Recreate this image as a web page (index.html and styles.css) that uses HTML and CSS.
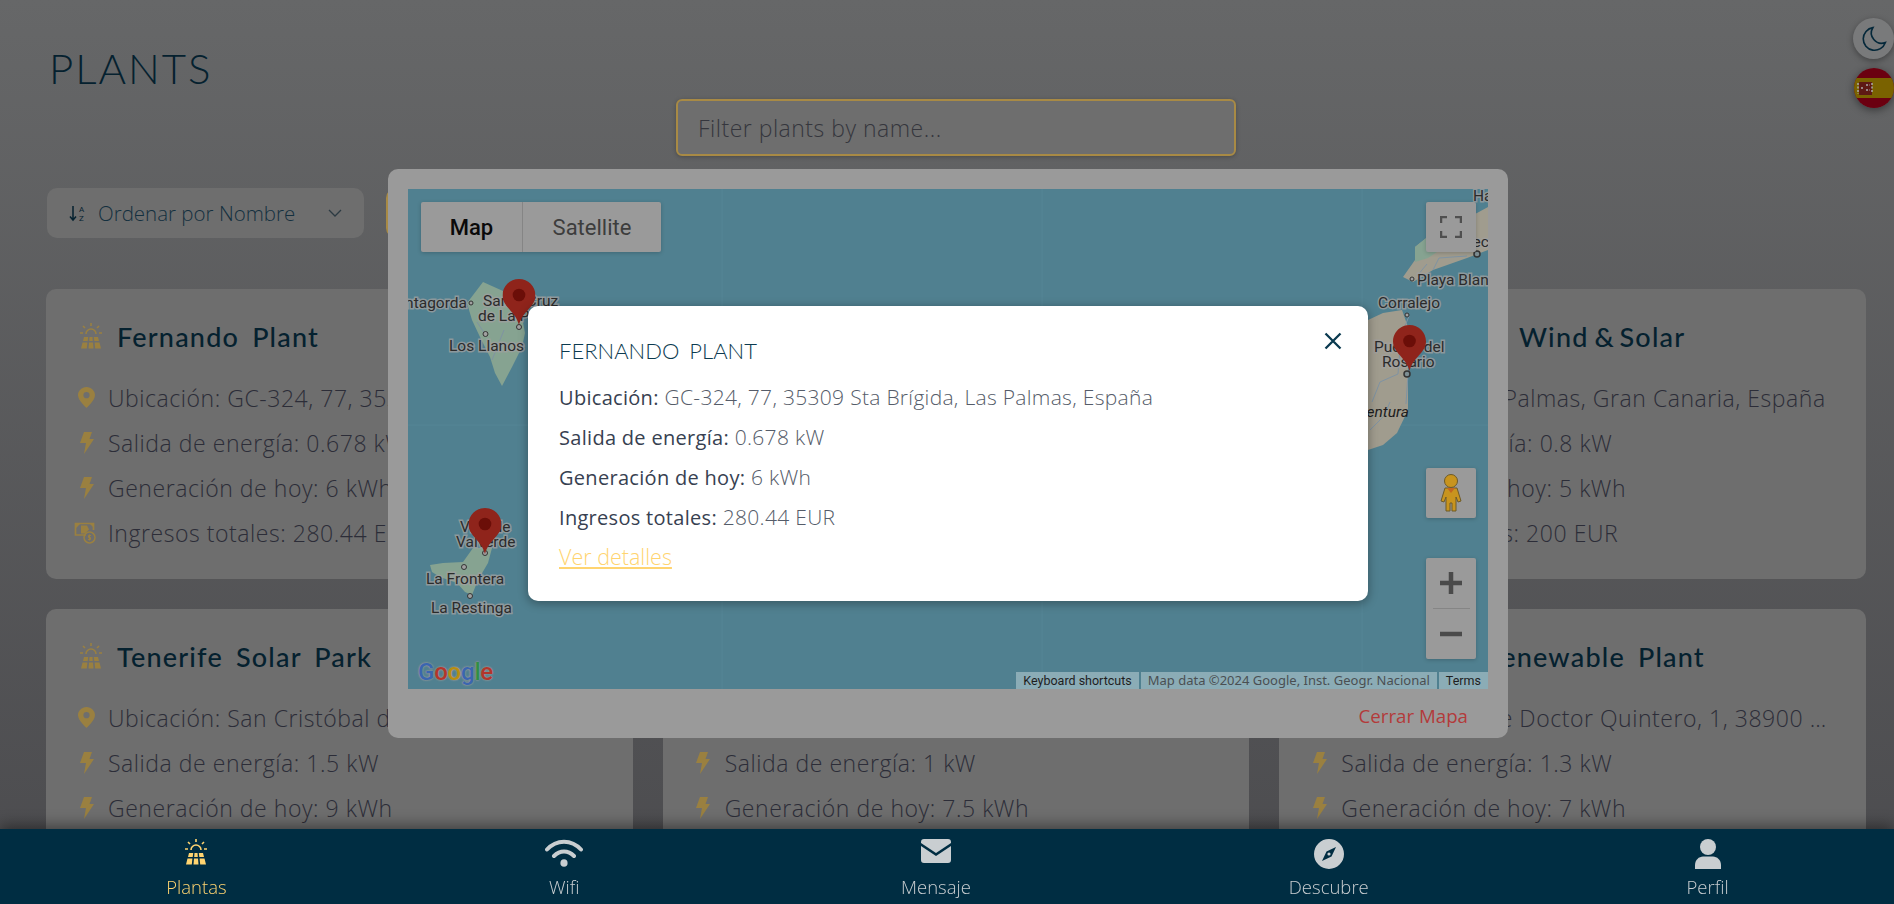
FILE: index.html
```html
<!DOCTYPE html>
<html lang="en">
<head>
  <meta charset="UTF-8" />
  <title>Plants</title>
  <link rel="stylesheet" href="styles.css">
</head>
<body>
  <svg class="sprites" width="0" height="0">
    <symbol id="i-panel" viewBox="0 0 26 26">
      <path d="M13 0v3M5 3l2 2M21 3l-2 2M2 10h3M21 10h3M8 11a5 5 0 0 1 10 0" fill="none" stroke="currentColor" stroke-width="1.6"/>
      <path d="M6 14h4.200l-.5 4H5zM11.500 14h3l.3 4h-3.600zM15.800 14H20l1 4h-4.700zM4.500 19.500h4.900L8.800 25.500H3zM11 19.500h4l.5 6h-5zM16.600 19.500h4.900L23 25.500h-5.800z" fill="currentColor"/>
    </symbol>
    <symbol id="i-pin" viewBox="0 0 17 21">
      <path fill-rule="evenodd" fill="currentColor" d="M8.500 0C3.800 0 0 3.700 0 8.300 0 13.500 8.500 21 8.500 21S17 13.500 17 8.300C17 3.700 13.200 0 8.500 0zm0 11.300a3.100 3.100 0 1 1 0-6.200 3.100 3.100 0 0 1 0 6.200z"/>
    </symbol>
    <symbol id="i-bolt" viewBox="0 0 14 22">
      <path fill="currentColor" d="M4 0h8L9.500 7H14L4 22l2-11H0z"/>
    </symbol>
    <symbol id="i-money" viewBox="0 0 22 22">
      <path d="M12 13H1.500V1.500h18V8" fill="none" stroke="currentColor" stroke-width="1.700"/>
      <path d="M1.500 1.500h5l-5 5zM19.500 1.500v4l-4-4zM7 3.500h6l2 4-4 4H7z" fill="currentColor"/>
      <circle cx="15.500" cy="15.500" r="5.500" fill="none" stroke="currentColor" stroke-width="1.500"/>
      <path d="M17 13.500h-2.500v2h2v2H14M15.500 12.500v6" fill="none" stroke="currentColor"/>
    </symbol>
  </svg>

  <main class="page">
    <h1 class="page-title">PLANTS</h1>
    <div class="filter-row">
      <input class="filter-input" type="text" placeholder="Filter plants by name..." />
    </div>
    <div class="toolbar">
      <div class="sort-select">
        <svg class="sort-icon" viewBox="0 0 17 17">
          <path d="M4 1v14M1 11.500 4 15l3-3.500" fill="none" stroke="currentColor" stroke-width="1.500"/>
          <text x="10" y="7" class="sort-letter">A</text>
          <text x="10" y="16" class="sort-letter">Z</text>
        </svg>
        <span class="sort-label">Ordenar por Nombre</span>
        <svg class="sort-chevron" viewBox="0 0 14 8"><path d="M1 1l6 6 6-6" fill="none" stroke="currentColor" stroke-width="1.300"/></svg>
      </div>
      <button class="map-btn" aria-label="Map"></button>
    </div>

    <div class="plant-grid">
      <article class="card">
        <h2 class="card-title"><svg class="title-icon"><use href="#i-panel"/></svg>Fernando Plant</h2>
        <p class="row"><span class="row-icon"><svg class="ic-pin"><use href="#i-pin"/></svg></span><span class="row-text">Ubicación: GC-324, 77, 35309 Sta Brígida, Las Palmas, España</span></p>
        <p class="row"><span class="row-icon"><svg class="ic-bolt"><use href="#i-bolt"/></svg></span><span class="row-text">Salida de energía: 0.678 kW</span></p>
        <p class="row"><span class="row-icon"><svg class="ic-bolt"><use href="#i-bolt"/></svg></span><span class="row-text">Generación de hoy: 6 kWh</span></p>
        <p class="row"><span class="row-icon"><svg class="ic-money"><use href="#i-money"/></svg></span><span class="row-text">Ingresos totales: 280.44 EUR</span></p>
      </article>
      <article class="card"></article>
      <article class="card">
        <h2 class="card-title"><svg class="title-icon"><use href="#i-panel"/></svg><span>Grancanaria Wind<span class="title-amp"> &amp; </span>Solar</span></h2>
        <p class="row"><span class="row-icon"><svg class="ic-pin"><use href="#i-pin"/></svg></span><span class="row-text">Ubicación: Las Palmas, Gran Canaria, España</span></p>
        <p class="row"><span class="row-icon"><svg class="ic-bolt"><use href="#i-bolt"/></svg></span><span class="row-text">Salida de energía: 0.8 kW</span></p>
        <p class="row"><span class="row-icon"><svg class="ic-bolt"><use href="#i-bolt"/></svg></span><span class="row-text">Generación de hoy: 5 kWh</span></p>
        <p class="row"><span class="row-icon"><svg class="ic-money"><use href="#i-money"/></svg></span><span class="row-text">Ingresos totales: 200 EUR</span></p>
      </article>
      <article class="card">
        <h2 class="card-title"><svg class="title-icon"><use href="#i-panel"/></svg>Tenerife Solar Park</h2>
        <p class="row"><span class="row-icon"><svg class="ic-pin"><use href="#i-pin"/></svg></span><span class="row-text">Ubicación: San Cristóbal de La Laguna, Santa Cruz de Tenerife</span></p>
        <p class="row"><span class="row-icon"><svg class="ic-bolt"><use href="#i-bolt"/></svg></span><span class="row-text">Salida de energía: 1.5 kW</span></p>
        <p class="row"><span class="row-icon"><svg class="ic-bolt"><use href="#i-bolt"/></svg></span><span class="row-text">Generación de hoy: 9 kWh</span></p>
      </article>
      <article class="card">
        <h2 class="card-title"></h2>
        <p class="row"></p>
        <p class="row"><span class="row-icon"><svg class="ic-bolt"><use href="#i-bolt"/></svg></span><span class="row-text">Salida de energía: 1 kW</span></p>
        <p class="row"><span class="row-icon"><svg class="ic-bolt"><use href="#i-bolt"/></svg></span><span class="row-text">Generación de hoy: 7.5 kWh</span></p>
      </article>
      <article class="card">
        <h2 class="card-title"><svg class="title-icon"><use href="#i-panel"/></svg>El Hierro Renewable Plant</h2>
        <p class="row"><span class="row-icon"><svg class="ic-pin"><use href="#i-pin"/></svg></span><span class="row-text">Ubicación: Calle Doctor Quintero, 1, 38900 Valverde, El Hierro, España</span></p>
        <p class="row"><span class="row-icon"><svg class="ic-bolt"><use href="#i-bolt"/></svg></span><span class="row-text">Salida de energía: 1.3 kW</span></p>
        <p class="row"><span class="row-icon"><svg class="ic-bolt"><use href="#i-bolt"/></svg></span><span class="row-text">Generación de hoy: 7 kWh</span></p>
      </article>
    </div>
  </main>

  <div class="side-btns">
    <button class="moon-btn" aria-label="Dark mode">
      <svg viewBox="0 0 24 24" width="26" height="26"><path d="M11 1.500a10.500 10.500 0 1 0 11.500 13.800A9.500 9.500 0 0 1 11 1.500z" fill="none" stroke="currentColor" stroke-width="1.500"/></svg>
    </button>
    <div class="flag">
      <svg viewBox="0 0 40 40" width="40" height="40">
        <rect width="40" height="40" fill="#6b0010"/>
        <rect y="10" width="40" height="20" fill="#7a6200"/>
        <rect x="5" y="14" width="13" height="13" fill="#5e1a14"/>
        <path d="M4 15v11M18 15v10M7 20h3M12 17h4M12 22h4" stroke="#a9a9a9" stroke-width="1.500" stroke-dasharray="2 1.500"/>
      </svg>
    </div>
  </div>

  <div class="overlay">
    <section class="map-modal">
      <div class="map">
        <svg class="map-canvas" viewBox="408 189 1080 500" width="1080" height="500">
          <defs>
            <symbol id="marker" viewBox="0 0 33 46">
              <path fill="#8f241b" d="M16.500 0C7.400 0 0 7.400 0 16.500 0 28 13 32 16.500 46 20 32 33 28 33 16.500 33 7.400 25.600 0 16.500 0z"/>
              <circle cx="16.500" cy="16" r="6.300" fill="#6b0e08"/>
            </symbol>
          </defs>
          <g class="seams">
            <path d="M722 189v500M1042 189v500M1362 189v500M408 425h1080"/>
          </g>
          <polygon class="land-green" points="467,303 483,282 503,291 522,317 525,333 522,347 512,367 502,386 495,373 490,357 480,337 472,320"/>
          <polygon class="land-green" points="430,565 443,563 463,562 473,548 492,548 488,563 478,580 472,595 465,592 457,583 440,577 432,572"/>
          <polygon class="land-sand" points="1415,247 1430,235 1477,213 1488,207 1488,250 1467,258 1433,270 1413,282 1403,277 1415,260"/>
          <polygon class="land-green" points="1415,247 1430,235 1445,232 1440,250 1428,258 1415,262"/>
          <polygon class="land-sand" points="1368,320 1383,313 1402,310 1408,327 1408,377 1408,410 1397,433 1383,445 1368,450"/>
          <path class="road" d="M1409 316l-8 20-3 38-18 8-8 20M1408 374l-2 30M1370 430l14-14 6-14M1433 270l6-12 28-2M1417 276l10-12"/>
          <path class="road" d="M485 334l-8 -12M492 360l12 -30"/>

          <g class="towns">
            <circle cx="471" cy="303" r="2"/><circle cx="519" cy="327" r="2.500"/><circle cx="485.500" cy="334" r="2.500"/>
            <circle cx="485" cy="553" r="2.500"/><circle cx="464" cy="567" r="2.500"/><circle cx="470" cy="596" r="2.500"/>
            <circle cx="1412" cy="279" r="2"/><circle cx="1407" cy="315" r="2"/>
            <circle class="town-big" cx="1477" cy="254" r="3"/><circle class="town-big" cx="1407" cy="374" r="3"/>
          </g>
          <g class="labels">
            <text x="467" y="308" text-anchor="end">Puntagorda</text>
            <text x="483" y="306">Santa Cruz</text>
            <text x="478" y="321">de La Palma</text>
            <text x="449" y="351">Los Llanos</text>
            <text x="460" y="532">Villa de</text>
            <text x="456" y="547">Valverde</text>
            <text x="426" y="584">La Frontera</text>
            <text x="431" y="613">La Restinga</text>
            <text x="1473" y="201">Haría</text>
            <text x="1452" y="247">Arrecife</text>
            <text x="1417" y="285">Playa Blanca</text>
            <text x="1378" y="308">Corralejo</text>
            <text x="1374" y="352">Puerto del</text>
            <text x="1382" y="367">Rosario</text>
            <text x="1409" y="417" text-anchor="end" class="label-island">Fuerteventura</text>
          </g>
          <use href="#marker" x="502.500" y="279" width="33" height="46"/>
          <use href="#marker" x="468.500" y="508" width="33" height="46"/>
          <use href="#marker" x="1393" y="325" width="33" height="46"/>
        </svg>

        <div class="map-types">
          <span class="map-type map-type-on">Map</span>
          <span class="map-type">Satellite</span>
        </div>
        <div class="map-ctl map-full">
          <svg viewBox="0 0 22 22" width="22" height="22"><path d="M1 7V1h6M15 1h6v6M21 15v6h-6M7 21H1v-6" fill="none" stroke="#4f4f4f" stroke-width="2.500"/></svg>
        </div>
        <div class="map-ctl map-peg">
          <svg viewBox="0 0 22 38" width="22" height="38">
            <circle cx="11" cy="7" r="6.500" fill="#c8941e" stroke="#6d5a28"/>
            <path d="M5 14h12l4 13-3 1-2-5v14h-4v-8h-2v8H6V23l-2 5-3-1z" fill="#c8941e" stroke="#6d5a28"/>
            <path d="M7 14h8l-4 5z" fill="#c2651f"/>
          </svg>
        </div>
        <div class="map-ctl map-zoom">
          <span class="zoom-part"><svg viewBox="0 0 22 22" width="22" height="22"><path d="M0 11h22M11 0v22" stroke="#4a4a4a" stroke-width="4.500"/></svg></span>
          <span class="zoom-line"></span>
          <span class="zoom-part"><svg viewBox="0 0 22 22" width="22" height="22"><path d="M0 11h22" stroke="#4a4a4a" stroke-width="4.500"/></svg></span>
        </div>
        <div class="google-logo"><span class="g-blue">G</span><span class="g-red">o</span><span class="g-yellow">o</span><span class="g-blue">g</span><span class="g-green">l</span><span class="g-red">e</span></div>
        <div class="attribution">
          <span class="attr-item">Keyboard shortcuts</span>
          <span class="attr-item attr-data">Map data ©2024 Google, Inst. Geogr. Nacional</span>
          <span class="attr-item">Terms</span>
        </div>

        <div class="info-window">
          <button class="info-close" aria-label="Close">
            <svg viewBox="0 0 18 18" width="18" height="18"><path d="M1.500 1.500l15 15M16.500 1.500l-15 15" stroke="#0a3a50" stroke-width="2.300"/></svg>
          </button>
          <h3 class="info-title">FERNANDO PLANT</h3>
          <p class="info-line"><strong>Ubicación:</strong> GC-324, 77, 35309 Sta Brígida, Las Palmas, España</p>
          <p class="info-line"><strong>Salida de energía:</strong> 0.678 kW</p>
          <p class="info-line"><strong>Generación de hoy:</strong> 6 kWh</p>
          <p class="info-line"><strong>Ingresos totales:</strong> 280.44 EUR</p>
          <a class="info-link" href="#">Ver detalles</a>
        </div>
      </div>
      <div class="modal-footer">
        <button class="close-map">Cerrar Mapa</button>
      </div>
    </section>
  </div>

  <nav class="bottom-nav">
    <a class="nav-item nav-active nav-w1">
      <svg class="nav-icon" width="26" height="26"><use href="#i-panel"/></svg>
      <span>Plantas</span>
    </a>
    <a class="nav-item nav-w2">
      <svg class="nav-icon" viewBox="0 0 38 28" width="38" height="28">
        <path d="M2 10.500C11.500 0 26.500 0 36 10.500M9 17c6-6 14-6 20 0" fill="none" stroke="currentColor" stroke-width="4" stroke-linecap="round"/>
        <ellipse cx="19" cy="24" rx="3.600" ry="3.800" fill="currentColor"/>
      </svg>
      <span>Wifi</span>
    </a>
    <a class="nav-item nav-w3">
      <svg class="nav-icon" viewBox="0 0 30 24" width="30" height="24">
        <path fill="currentColor" d="M3 0h24a3 3 0 0 1 3 3v1L15 14 0 4V3a3 3 0 0 1 3-3zM0 7l15 10L30 7v14a3 3 0 0 1-3 3H3a3 3 0 0 1-3-3z"/>
      </svg>
      <span>Mensaje</span>
    </a>
    <a class="nav-item nav-w4">
      <svg class="nav-icon" viewBox="0 0 30 30" width="30" height="30">
        <path fill="currentColor" fill-rule="evenodd" d="M15 0a15 15 0 1 0 0 30 15 15 0 0 0 0-30zm7 8l-4.500 9.500L8 22l4.500-9.500zM15 13.400a1.600 1.600 0 1 0 0 3.200 1.600 1.600 0 0 0 0-3.200z"/>
      </svg>
      <span>Descubre</span>
    </a>
    <a class="nav-item nav-w5">
      <svg class="nav-icon" viewBox="0 0 26 30" width="26" height="30">
        <ellipse cx="13" cy="8" rx="8" ry="8" fill="currentColor"/>
        <path fill="currentColor" d="M0 30v-4c0-5 4-8.500 8-8.500h10c4 0 8 3.500 8 8.500v4z"/>
      </svg>
      <span>Perfil</span>
    </a>
  </nav>
</body>
</html>
```

FILE: styles.css
```css
* {
  box-sizing: border-box;
}
html, body {
  height: 100%;
}
body {
  margin: 0;
  display: flex;
  flex-direction: column;
  height: 100vh;
  overflow: hidden;
  font-family: "Open Sans", sans-serif;
  background: linear-gradient(#666768, #4b4b4e);
  color: #2c2d38;
}
.sprites {
  position: absolute;
}

/* page under the modal */
.page {
  flex: 1;
  min-height: 0;
  overflow: hidden;
  padding: 43px 28px 0 46px;
}
.page-title {
  margin: 0;
  height: 56px;
  padding-left: 3px;
  font-family: Lato, sans-serif;
  font-weight: 300;
  font-size: 42px;
  line-height: 50px;
  letter-spacing: 2px;
  color: #05212f;
}
.filter-row {
  display: flex;
  justify-content: center;
}
.filter-input {
  width: 560px;
  height: 57px;
  padding: 0 20px;
  background: #6e6e6e;
  border: 2px solid #a88a45;
  border-radius: 6px;
  box-shadow: 0 1px 4px rgba(0,0,0,.25);
  font-family: "Open Sans", sans-serif;
  font-weight: 300;
  font-size: 23px;
  letter-spacing: .5px;
  outline: none;
}
.filter-input::placeholder {
  color: #35363d;
  opacity: 1;
}
.toolbar {
  display: flex;
  gap: 22px;
  margin-top: 32px;
  padding-left: 1px;
}
.sort-select {
  display: flex;
  align-items: center;
  width: 317px;
  height: 50px;
  padding: 0 22px;
  background: #6e6e6e;
  border-radius: 10px;
  color: #05212f;
}
.sort-icon {
  width: 17px;
  height: 17px;
  margin-right: 12px;
}
.sort-letter {
  font-family: Roboto, sans-serif;
  font-size: 8px;
  fill: currentColor;
}
.sort-label {
  flex: 1;
  font-weight: 300;
  font-size: 20.500px;
  white-space: nowrap;
  color: #14303f;
}
.sort-chevron {
  width: 14px;
  height: 8px;
  color: #2c3a42;
}
.map-btn {
  width: 200px;
  height: 50px;
  background: #6e6e6e;
  border: 2px solid #a88a45;
  border-radius: 10px;
}
.plant-grid {
  display: grid;
  grid-template-columns: repeat(3, minmax(0, 1fr));
  grid-template-rows: 290px 290px;
  gap: 30px;
  margin-top: 51px;
}
.card {
  min-width: 0;
  padding: 27px 32px 23px;
  background: #6e6e6e;
  border-radius: 10px;
}
.card-title {
  display: flex;
  align-items: center;
  gap: 13px;
  height: 40px;
  margin: 0 0 19px;
  white-space: nowrap;
  font-family: Lato, sans-serif;
  font-weight: 500;
  font-size: 27px;
  letter-spacing: 1.200px;
  word-spacing: 5px;
  color: #05212f;
}
.title-amp {
  letter-spacing: 0;
  word-spacing: -1px;
}
.title-icon {
  flex: none;
  width: 26px;
  height: 26px;
  color: #9a8040;
}
.row {
  display: flex;
  align-items: center;
  height: 45px;
  margin: 0;
  font-weight: 300;
  font-size: 23px;
  letter-spacing: .55px;
}
.row-icon {
  flex: none;
  display: flex;
  justify-content: center;
  width: 17px;
  margin-right: 13px;
  color: #9a8040;
}
.ic-pin {
  width: 17px;
  height: 21px;
}
.ic-bolt {
  width: 14px;
  height: 22px;
}
.ic-money {
  flex: none;
  width: 22px;
  height: 22px;
  margin-left: -3px;
}
.row-text {
  min-width: 0;
  overflow: hidden;
  white-space: nowrap;
  text-overflow: ellipsis;
}

/* dark / language buttons */
.side-btns {
  position: fixed;
  top: 18px;
  right: 0;
  display: flex;
  flex-direction: column;
  align-items: flex-end;
  gap: 9px;
}
.moon-btn {
  display: flex;
  align-items: center;
  justify-content: center;
  width: 41px;
  height: 41px;
  padding: 0;
  border: 0;
  border-radius: 50%;
  background: #797a7b;
  color: #05283a;
  box-shadow: 0 2px 6px rgba(0,0,0,.35);
}
.flag {
  width: 40px;
  height: 40px;
  overflow: hidden;
  border-radius: 50%;
  box-shadow: 0 2px 8px rgba(0,0,0,.45);
}

/* map modal */
.overlay {
  position: fixed;
  inset: 0;
  display: flex;
  align-items: center;
  justify-content: center;
  padding: 3px 0 0 2px;
}
.map-modal {
  width: 1120px;
  height: 569px;
  padding: 20px 20px 0;
  background: #9a9a9a;
  border-radius: 10px;
}
.map {
  position: relative;
  width: 1080px;
  height: 500px;
  overflow: hidden;
  background: #508090;
}
.map-canvas {
  display: block;
}
.seams path {
  fill: none;
  stroke: #548595;
  stroke-width: 1;
}
.land-green {
  fill: #86a391;
}
.land-sand {
  fill: #a09c8e;
}
.road {
  fill: none;
  stroke: #7f93a3;
  stroke-width: 1;
}
.towns circle {
  fill: #a0a0a0;
  stroke: #333;
  stroke-width: 1;
}
.towns .town-big {
  fill: #7d8e93;
  stroke-width: 1.500;
}
.labels text {
  font-family: Roboto, sans-serif;
  font-size: 15.500px;
  fill: #2b2b2b;
  stroke: rgba(160,160,160,.75);
  stroke-width: 3px;
  paint-order: stroke;
}
.labels .label-island {
  font-style: italic;
  stroke: none;
  fill: #1d1d1d;
}
.map-types {
  position: absolute;
  top: 13px;
  left: 13px;
  display: flex;
  height: 50px;
  overflow: hidden;
  background: #9a9a9a;
  border-radius: 2px;
  box-shadow: 0 1px 4px rgba(0,0,0,.2);
}
.map-type {
  display: flex;
  align-items: center;
  justify-content: center;
  width: 138px;
  font-family: Roboto, sans-serif;
  font-size: 22px;
  color: #3d3d3d;
}
.map-type-on {
  width: 102px;
  font-weight: 500;
  color: #0a0a0a;
  border-right: 1px solid #858585;
}
.map-ctl {
  position: absolute;
  right: 12px;
  width: 50px;
  display: flex;
  align-items: center;
  justify-content: center;
  background: #9a9a9a;
  border-radius: 2px;
  box-shadow: 0 1px 4px rgba(0,0,0,.2);
}
.map-full {
  top: 13px;
  height: 50px;
}
.map-peg {
  top: 279px;
  height: 50px;
}
.map-zoom {
  top: 369px;
  height: 101px;
  flex-direction: column;
}
.zoom-part {
  display: flex;
  align-items: center;
  justify-content: center;
  flex: 1;
  width: 100%;
}
.zoom-line {
  width: 37px;
  height: 1px;
  background: #858585;
}
.google-logo {
  position: absolute;
  left: 10px;
  bottom: 3px;
  font-family: Roboto, sans-serif;
  font-weight: 500;
  font-size: 24px;
  line-height: 28px;
  letter-spacing: -.2px;
  text-shadow: 0 0 2px #9a9a9a, 0 0 2px #9a9a9a;
}
.g-blue { color: #3a66b0; }
.g-red { color: #b3352b; }
.g-yellow { color: #b88e10; }
.g-green { color: #2f8f45; }
.attribution {
  position: absolute;
  right: 0;
  bottom: 0;
  display: flex;
  gap: 2px;
  height: 17px;
  font-family: Roboto, sans-serif;
  font-size: 12.500px;
  line-height: 17px;
  color: #1e1e1e;
}
.attr-item {
  padding: 0 7px;
  background: #8bacb6;
}
.attr-data {
  font-family: "Noto Sans", sans-serif;
  font-size: 13px;
  color: #4a4f52;
}
.info-window {
  position: absolute;
  left: 120px;
  top: 117px;
  width: 840px;
  height: 295px;
  padding: 32px 31px 25px;
  background: #fff;
  border-radius: 10px;
  box-shadow: 0 2px 10px 1px rgba(0,0,0,.3);
  color: #555c69;
}
.info-close {
  position: absolute;
  top: 26px;
  right: 26px;
  width: 18px;
  height: 18px;
  padding: 0;
  border: 0;
  background: none;
}
.info-title {
  height: 25px;
  margin: 0 0 14px;
  font-family: Lato, sans-serif;
  font-weight: 300;
  font-size: 22px;
  line-height: 25px;
  word-spacing: 4px;
  color: #0c3a4f;
}
.info-line {
  height: 40px;
  margin: 0;
  font-weight: 300;
  font-size: 21px;
  letter-spacing: .3px;
  line-height: 40px;
}
.info-line strong {
  font-weight: 500;
  font-size: 20px;
  color: #374151;
}
.info-link {
  font-weight: 300;
  font-size: 21.500px;
  line-height: 40px;
  color: #ffd470;
  text-decoration: underline;
}
.modal-footer {
  display: flex;
  justify-content: flex-end;
  height: 49px;
  padding-top: 3px;
}
.close-map {
  padding: 0 20px;
  border: 0;
  background: none;
  font-family: "Open Sans", sans-serif;
  font-size: 18.700px;
  color: #b33a3a;
}

/* bottom nav */
.bottom-nav {
  position: relative;
  flex: none;
  display: flex;
  justify-content: space-around;
  height: 75px;
  padding: 0 6px;
  background: #002d42;
  box-shadow: 0 -3px 14px rgba(0,0,0,.45);
}
.nav-item {
  display: flex;
  flex-direction: column;
  align-items: center;
  height: 75px;
  padding-top: 10px;
  font-weight: 300;
  font-size: 18.500px;
  color: #c9ced1;
}
.nav-item span {
  position: absolute;
  top: 45px;
}
.nav-active {
  color: #ffd470;
}
.nav-w1 { width: 64px; }
.nav-w2 { width: 38px; }
.nav-w3 { width: 72px; }
.nav-w4 { width: 80px; }
.nav-w5 { width: 44px; }
.nav-icon {
  display: block;
}
```
